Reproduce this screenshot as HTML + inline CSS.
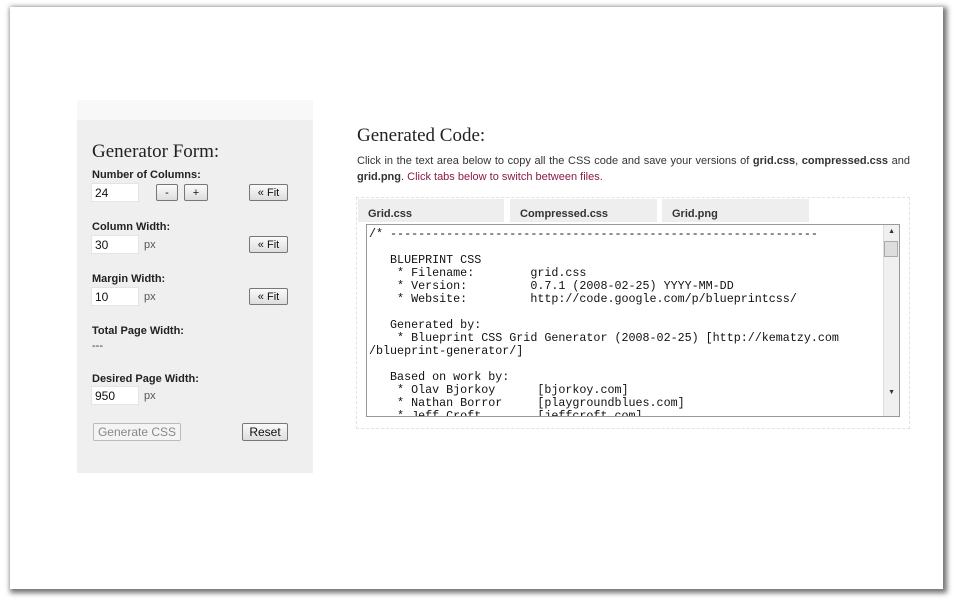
<!DOCTYPE html>
<html><head><style>
body{margin:0;width:954px;height:600px;background:#fff;position:relative;overflow:hidden;font-family:"Liberation Sans",sans-serif;}
.page{position:absolute;left:10px;top:7px;width:933px;height:582px;background:#fff;box-shadow:2px 2px 5px 2px rgba(0,0,0,.55);}
.a{position:absolute;}
.lbl{position:absolute;left:92px;font-size:11px;font-weight:bold;color:#222;}
.inp{position:absolute;left:91px;width:48px;height:19px;background:#fff;border:1px solid #e4e4e4;font-size:12px;line-height:19px;padding-left:3px;box-sizing:border-box;color:#111;}
.btn{position:absolute;height:17px;border:1px solid #777;border-radius:2px;background:linear-gradient(#fafafa,#ddd);font-size:11px;line-height:16px;text-align:center;box-sizing:border-box;color:#111;}
.px{position:absolute;left:144px;font-size:11px;color:#555;}
.tab{position:absolute;top:199px;height:23px;background:#eee;font-size:11px;font-weight:bold;color:#333;line-height:30px;box-sizing:border-box;padding-left:10px;}
pre{margin:0;font-family:"Liberation Mono",monospace;font-size:11.7px;line-height:13px;color:#111;}
</style></head><body>
<div class="page"></div>
<div class="a" style="left:77px;top:100px;width:236px;height:20px;background:#f8f8f8"></div>
<div class="a" style="left:77px;top:120px;width:236px;height:353px;background:#efefef"></div>
<div class="a" style="left:92px;top:141px;font-family:'Liberation Serif',serif;font-size:19px;color:#222">Generator Form:</div>
<div class="lbl" style="top:169px">Number of Columns:</div>
<div class="inp" style="top:183px">24</div>
<div class="btn" style="left:156px;top:184px;width:22px">-</div>
<div class="btn" style="left:184px;top:184px;width:24px">+</div>
<div class="btn" style="left:249px;top:184px;width:39px">« Fit</div>
<div class="lbl" style="top:221px">Column Width:</div>
<div class="inp" style="top:235px">30</div><div class="px" style="top:239px">px</div>
<div class="btn" style="left:249px;top:236px;width:39px">« Fit</div>
<div class="lbl" style="top:273px">Margin Width:</div>
<div class="inp" style="top:287px">10</div><div class="px" style="top:291px">px</div>
<div class="btn" style="left:249px;top:288px;width:39px">« Fit</div>
<div class="lbl" style="top:325px">Total Page Width:</div>
<div class="a" style="left:92px;top:340px;font-size:11px;color:#333">---</div>
<div class="lbl" style="top:373px">Desired Page Width:</div>
<div class="inp" style="top:386px">950</div><div class="px" style="top:390px">px</div>
<div class="btn" style="left:93px;top:423px;width:88px;height:18px;border-color:#bbb;background:#f4f4f4;color:#888;font-size:12px">Generate CSS</div>
<div class="btn" style="left:242px;top:423px;width:46px;height:18px;font-size:12px">Reset</div>

<div class="a" style="left:357px;top:125px;font-family:'Liberation Serif',serif;font-size:19px;color:#222">Generated Code:</div>
<div class="a" style="left:357px;top:153px;width:553px;font-size:11px;line-height:16px;color:#333;text-align:justify;text-align-last:left">Click in the text area below to copy all the CSS code and save your versions of <b>grid.css</b>, <b>compressed.css</b> and <b>grid.png</b>. <span style="color:#8a1a4a">Click tabs below to switch between files.</span></div>
<div class="a" style="left:356px;top:197px;width:552px;height:230px;border:1px dashed #e2e2e2"></div>
<div class="tab" style="left:358px;width:146px">Grid.css</div>
<div class="tab" style="left:510px;width:147px">Compressed.css</div>
<div class="tab" style="left:662px;width:147px">Grid.png</div>
<div class="a" style="left:366px;top:224px;width:534px;height:193px;border:1px solid #999;box-sizing:border-box;overflow:hidden;background:#fff">
<pre style="padding:3px 0 0 2px">/* -------------------------------------------------------------

   BLUEPRINT CSS
    * Filename:        grid.css
    * Version:         0.7.1 (2008-02-25) YYYY-MM-DD
    * Website:         http://code.google.com/p/blueprintcss/

   Generated by:
    * Blueprint CSS Grid Generator (2008-02-25) [http://kematzy.com
/blueprint-generator/]

   Based on work by:
    * Olav Bjorkoy      [bjorkoy.com]
    * Nathan Borror     [playgroundblues.com]
    * Jeff Croft        [jeffcroft.com]</pre>
<div class="a" style="right:0;top:0;width:15px;height:191px;background:#f0f0f0;border-left:1px solid #ddd"></div>
<div class="a" style="right:1px;top:16px;width:12px;height:14px;background:#ddd;border:1px solid #aaa"></div>
<div class="a" style="right:4px;top:3px;font-size:7px;color:#333">▲</div>
<div class="a" style="right:4px;top:164px;font-size:7px;color:#333">▼</div>
</div>
</body></html>
